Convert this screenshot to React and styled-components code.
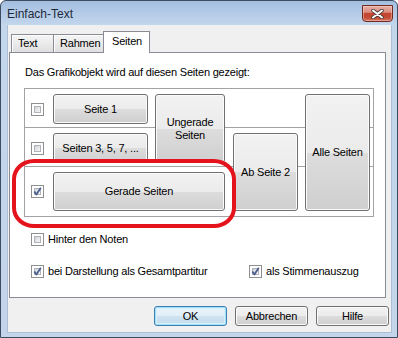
import React from "react";
import styled, { createGlobalStyle } from "styled-components";

const GlobalStyle = createGlobalStyle`
  html, body { margin: 0; padding: 0; background: #ffffff; }
  body { font-family: "Liberation Sans", Arial, sans-serif; font-size: 11px; color: #000; }
  * { box-sizing: border-box; }
`;

const Window = styled.div`
  width: 398px;
  height: 338px;
  border: 1px solid #3b4b60;
  border-radius: 6px 6px 0 0;
  background: linear-gradient(to bottom, #a2bedf 0px, #b7cde8 14px, #c2d6ec 24px, #c2d5eb 100%);
  display: flex;
  flex-direction: column;
  overflow: hidden;
`;

const TitleBar = styled.div`
  height: 24px;
  display: flex;
  align-items: flex-start;
  padding: 0 4px 0 6px;
  flex-shrink: 0;
`;

const Title = styled.div`
  flex: 1;
  font-size: 12px;
  line-height: 15px;
  padding-top: 6px;
  color: #1e2a3a;
  letter-spacing: 0;
`;

const CloseButton = styled.div`
  margin-top: 4px;
  width: 31px;
  height: 17px;
  border: 1px solid #6f2a22;
  border-radius: 0 0 4px 4px;
  background: linear-gradient(to bottom, #e8b0a6 0%, #db8d80 42%, #c4452f 50%, #c24a36 75%, #d8735d 100%);
  box-shadow: inset 0 0 0 1px rgba(255, 220, 210, 0.45);
  display: flex;
  align-items: center;
  justify-content: center;
`;

const Client = styled.div`
  flex: 1;
  margin: 0 5px 4px 6px;
  background: #f0f0f0;
  border: 1px solid #aebfd3;
  border-top: none;
  display: flex;
  flex-direction: column;
  padding: 6px 2px 6px 1px;
`;

const TabStrip = styled.div`
  height: 21px;
  display: flex;
  align-items: flex-end;
  padding-left: 2px;
  position: relative;
  z-index: 1;
`;

const Tab = styled.div`
  width: ${(p) => p.$width}px;
  height: ${(p) => (p.$active ? 22 : 18)}px;
  margin-bottom: ${(p) => (p.$active ? -1 : 0)}px;
  margin-right: -1px;
  padding-left: ${(p) => (p.$active ? 8 : 6)}px;
  border: 1px solid #898c95;
  border-bottom: none;
  background: ${(p) =>
    p.$active ? "#ffffff" : "linear-gradient(to bottom, #f4f4f4 0%, #ebebeb 50%, #dedede 100%)"};
  line-height: ${(p) => (p.$active ? 18 : 17)}px;
  font-size: 11px;
  letter-spacing: -0.2px;
  position: relative;
  z-index: ${(p) => (p.$active ? 2 : 1)};
  box-shadow: ${(p) => (p.$active ? "none" : "inset 1px 1px 0 #fdfdfd")};
`;

const Panel = styled.div`
  position: relative;
  height: 246px;
  margin-right: 3px;
  background: #ffffff;
  border: 1px solid #898c95;
  padding: 13px 0 0 14px;
`;

const Intro = styled.div`
  padding-left: 1px;
  line-height: 13px;
  letter-spacing: -0.2px;
`;

const GroupBox = styled.div`
  margin-top: 9px;
  width: 350px;
  height: 129px;
  border: 1px solid #a3a3a3;
  display: grid;
  grid-template-columns: 20px 8px 95px 7px 70px 8px 65px 7px 65px;
  grid-template-rows: 30px 9px 30px 9px 39px;
  padding: 5px 3px 5px 0;
`;

const Divider = styled.div`
  grid-column: 1 / -1;
  grid-row: ${(p) => p.$row};
  align-self: start;
  margin-top: 3px;
  margin-right: -3px;
  height: 1px;
  background: #a3a3a3;
`;

const CheckCell = styled.div`
  grid-column: 1;
  grid-row: ${(p) => p.$row};
  display: flex;
  align-items: center;
  padding-left: 6px;
`;

const Box = styled.span`
  position: relative;
  width: 13px;
  height: 13px;
  flex-shrink: 0;
  border: 1px solid #8e8f8f;
  background: #ffffff;
  padding: 2px;
  display: inline-flex;
`;

const BoxFill = styled.span`
  flex: 1;
  border: 1px solid #b0b4ba;
  background: linear-gradient(135deg, #cfd2d6 0%, #e6e8ea 55%, #f6f6f6 100%);
`;

const Mark = styled.svg`
  position: absolute;
  left: -1px;
  top: -1px;
`;

const PageButton = styled.div`
  grid-column: ${(p) => p.$col};
  grid-row: ${(p) => p.$row};
  border: 1px solid #707070;
  border-radius: 3px;
  background: linear-gradient(to bottom, #f2f2f2 0%, #ebebeb 50%, #dddddd 50%, #cfcfcf 100%);
  box-shadow: inset 0 0 0 1px #fbfbfb;
  display: flex;
  align-items: center;
  justify-content: center;
  text-align: center;
  line-height: 13px;
  letter-spacing: -0.2px;
`;

const Option = styled.label`
  display: flex;
  align-items: center;
  gap: 4px;
  letter-spacing: -0.2px;
  line-height: 13px;
`;

const OptionRow = styled.div`
  margin-top: ${(p) => p.$top}px;
  padding-left: 7px;
  display: grid;
  grid-template-columns: 218px auto;
`;

const Highlight = styled.div`
  position: absolute;
  left: 2px;
  top: 106px;
  width: 224px;
  height: 69px;
  border: 4px solid #e5141c;
  border-radius: 22px / 20px;
  pointer-events: none;
`;

const ButtonBar = styled.div`
  margin-top: 8px;
  display: flex;
  justify-content: flex-end;
  gap: 8px;
`;

const DialogButton = styled.div`
  width: 73px;
  height: 20px;
  border: 1px solid ${(p) => (p.$default ? "#3c7fb1" : "#707070")};
  border-radius: 3px;
  background: ${(p) =>
    p.$default
      ? "linear-gradient(to bottom, #eaf4fb 0%, #e1eef8 50%, #cfe3f1 50%, #c2dbec 100%)"
      : "linear-gradient(to bottom, #f2f2f2 0%, #ebebeb 50%, #dddddd 50%, #cfcfcf 100%)"};
  box-shadow: ${(p) =>
    p.$default ? "inset 0 0 0 1px #9fe0fb, inset 0 0 0 2px #d6f1fc" : "inset 0 0 0 1px #fbfbfb"};
  display: flex;
  align-items: center;
  justify-content: center;
  letter-spacing: -0.2px;
`;

function CheckBox({ checked }) {
  return (
    <Box>
      <BoxFill />
      {checked && (
        <Mark width="13" height="13" viewBox="0 0 13 13">
          <path d="M3.3 6.6 L5.4 9.6 L9.8 2.8" fill="none" stroke="#4c5f8e" strokeWidth="1.8" strokeLinejoin="round" />
        </Mark>
      )}
    </Box>
  );
}

export default function App() {
  return (
    <>
      <GlobalStyle />
      <Window>
        <TitleBar>
          <Title>Einfach-Text</Title>
          <CloseButton>
            <svg width="13" height="10" viewBox="0 0 13 10">
              <path d="M2 1.5 L11 8.5 M11 1.5 L2 8.5" stroke="#4a3a3a" strokeWidth="3.6" strokeLinecap="round" />
              <path d="M2 1.5 L11 8.5 M11 1.5 L2 8.5" stroke="#ffffff" strokeWidth="2" strokeLinecap="round" />
            </svg>
          </CloseButton>
        </TitleBar>
        <Client>
          <TabStrip>
            <Tab $width={43}>Text</Tab>
            <Tab $width={51}>Rahmen</Tab>
            <Tab $width={47} $active>Seiten</Tab>
          </TabStrip>
          <Panel>
            <Intro>Das Grafikobjekt wird auf diesen Seiten gezeigt:</Intro>
            <GroupBox>
              <Divider $row={2} />
              <Divider $row={4} />
              <CheckCell $row={1}><CheckBox /></CheckCell>
              <CheckCell $row={3}><CheckBox /></CheckCell>
              <CheckCell $row={5}><CheckBox checked /></CheckCell>
              <PageButton $col="3" $row="1">Seite 1</PageButton>
              <PageButton $col="3" $row="3">Seiten 3, 5, 7, ...</PageButton>
              <PageButton $col="5" $row="1 / 4">Ungerade<br />Seiten</PageButton>
              <PageButton $col="3 / 6" $row="5">Gerade Seiten</PageButton>
              <PageButton $col="7" $row="3 / 6">Ab Seite 2</PageButton>
              <PageButton $col="9" $row="1 / 6">Alle Seiten</PageButton>
            </GroupBox>
            <OptionRow $top={16}>
              <Option><CheckBox />Hinter den Noten</Option>
            </OptionRow>
            <OptionRow $top={19}>
              <Option><CheckBox checked />bei Darstellung als Gesamtpartitur</Option>
              <Option><CheckBox checked />als Stimmenauszug</Option>
            </OptionRow>
            <Highlight />
          </Panel>
          <ButtonBar>
            <DialogButton $default>OK</DialogButton>
            <DialogButton>Abbrechen</DialogButton>
            <DialogButton>Hilfe</DialogButton>
          </ButtonBar>
        </Client>
      </Window>
    </>
  );
}
